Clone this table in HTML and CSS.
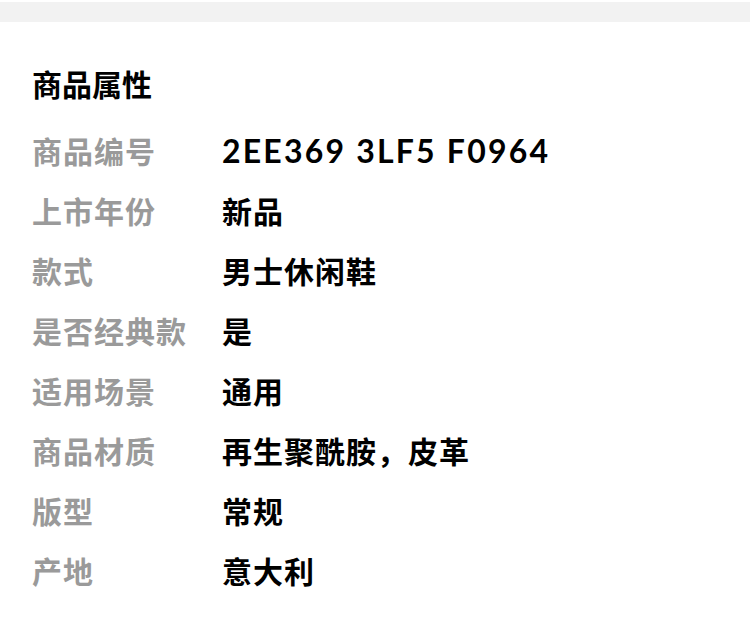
FILE: index.html
```html
<!DOCTYPE html>
<html lang="zh-CN">

<head>
  <meta charset="UTF-8">
  <title>商品属性</title>
  <link rel="stylesheet" href="styles.css">
</head>

<body>
  <div class="divider"></div>

  <!-- Attributes Section -->
  <section class="attrs">
    <h2 class="attrs-title">商品属性</h2>

    <dl class="attr-list">
      <div class="attr-row"><dt>商品编号</dt><dd class="code">2EE369 3LF5 F0964</dd></div>
      <div class="attr-row"><dt>上市年份</dt><dd>新品</dd></div>
      <div class="attr-row"><dt>款式</dt><dd>男士休闲鞋</dd></div>
      <div class="attr-row"><dt>是否经典款</dt><dd>是</dd></div>
      <div class="attr-row"><dt>适用场景</dt><dd>通用</dd></div>
      <div class="attr-row"><dt>商品材质</dt><dd>再生聚酰胺，皮革</dd></div>
      <div class="attr-row"><dt>版型</dt><dd>常规</dd></div>
      <div class="attr-row"><dt>产地</dt><dd>意大利</dd></div>
    </dl>
  </section>
</body>

</html>
```

FILE: styles.css
```css
body {
  margin: 0;
  padding: 0;
  background: #fff;
  font-family: "Noto Sans CJK SC", "Noto Sans", sans-serif;
  color: #000;
}

/* grey strip at the top */
.divider {
  height: 20px;
  margin-top: 2px;
  background-color: #f2f2f2;
}

.attrs {
  padding: 40px 32px 0;
}

.attrs-title {
  margin: 0 0 16px;
  font-size: 30px;
  line-height: 42px;
  font-weight: 700;
}

.attr-list {
  margin: 0;
}

.attr-row {
  display: grid;
  grid-template-columns: 190px 1fr;
  height: 60px;
  align-items: center;
}

.attr-row dt {
  color: #9a9a9a;
  font-size: 30px;
  font-weight: 700;
  letter-spacing: 1px;
}

.attr-row dd {
  margin: 0;
  font-size: 30px;
  font-weight: 700;
  letter-spacing: 1px;
}

.attr-row .code {
  font-family: "Lato", sans-serif;
  font-weight: 700;
  font-size: 32px;
  letter-spacing: 2.2px;
}
```
